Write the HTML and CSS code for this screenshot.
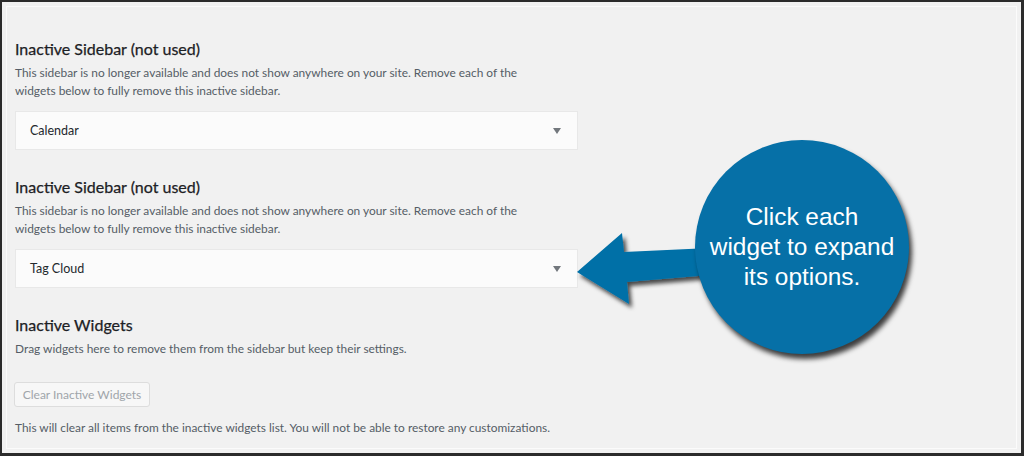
FILE: index.html
```html
<!DOCTYPE html>
<html lang="en">
<head>
  <meta charset="UTF-8" />
  <title>Widgets</title>
  <link rel="stylesheet" href="styles.css">
</head>
<body>

<div class="frame">
  <div class="content">

    <div class="sidebar">
      <h3>Inactive Sidebar (not used)</h3>
      <p class="desc">This sidebar is no longer available and does not show anywhere on your site. Remove each of the<br>widgets below to fully remove this inactive sidebar.</p>
      <div class="widget">
        <span>Calendar</span>
        <span class="caret"></span>
      </div>
    </div>

    <div class="sidebar">
      <h3>Inactive Sidebar (not used)</h3>
      <p class="desc">This sidebar is no longer available and does not show anywhere on your site. Remove each of the<br>widgets below to fully remove this inactive sidebar.</p>
      <div class="widget">
        <span>Tag Cloud</span>
        <span class="caret"></span>
      </div>
    </div>

    <div class="sidebar">
      <h3>Inactive Widgets</h3>
      <p class="desc">Drag widgets here to remove them from the sidebar but keep their settings.</p>
      <button class="clear-btn" disabled>Clear Inactive Widgets</button>
      <p class="desc note">This will clear all items from the inactive widgets list. You will not be able to restore any customizations.</p>
    </div>

  </div>

  <!-- callout overlay -->
  <div class="callout">
    <svg class="arrow" width="140" height="90" viewBox="0 0 140 90">
      <defs>
        <filter id="sh" x="-20%" y="-20%" width="150%" height="150%">
          <feDropShadow dx="3" dy="4" stdDeviation="2" flood-color="#000" flood-opacity="0.7"/>
        </filter>
      </defs>
      <polygon filter="url(#sh)" fill="#0670a7" points="2,45 47,6 49,25 135,21 135,48 52,55 54,77"/>
    </svg>
    <div class="bubble">Click each<br>widget to expand<br>its options.</div>
  </div>
</div>

</body>
</html>
```

FILE: styles.css
```css
html, body {
  margin: 0;
  padding: 0;
}
body {
  font-family: Lato, "Noto Sans", sans-serif;
  background: #f1f1f1;
  color: #23282d;
}
.frame {
  position: relative;
  box-sizing: border-box;
  width: 1024px;
  height: 456px;
  border: 3px solid #2b2b2b;
  border-top-width: 2px;
  border-left-width: 2px;
  box-shadow: inset 0 0 0 4px #f1f1f1, inset 0 0 0 5px #fbfbfb;
  background: #f1f1f1;
  overflow: hidden;
}
.content {
  width: 563px;
  padding: 36px 0 0 13px;
}
.sidebar h3 {
  margin: 0;
  font-size: 16px;
  font-weight: 400;
  color: #1d2125;
  line-height: 22px;
  -webkit-text-stroke: 0.25px #1d2125;
}
.desc {
  margin: 4px 0 0;
  font-size: 11.9px;
  line-height: 18px;
  color: #555d66;
}
.widget {
  display: flex;
  justify-content: space-between;
  align-items: center;
  box-sizing: border-box;
  height: 39px;
  margin: 11px 0 26px;
  padding: 0 16px 0 14px;
  background: #fbfbfb;
  border: 1px solid #e8e8e8;
  font-size: 12.5px;
  color: #23282d;
}
.caret {
  width: 0;
  height: 0;
  border-left: 4px solid transparent;
  border-right: 4px solid transparent;
  border-top: 6px solid #72777c;
}
.clear-btn {
  display: block;
  margin: 24px 0 0 -1px;
  height: 25px;
  width: 136px;
  padding: 0;
  font-family: inherit;
  font-size: 12px;
  color: #a0a5aa;
  background: #f7f7f7;
  border: 1px solid #ddd;
  border-radius: 3px;
}
.note {
  margin-top: 12px;
}
.callout {
  position: absolute;
  left: 573px;
  top: 136px;
  width: 340px;
  height: 230px;
}
.arrow {
  position: absolute;
  left: 0;
  top: 89px;
}
.bubble {
  position: absolute;
  left: 120px;
  top: 2px;
  width: 214px;
  height: 214px;
  border-radius: 50%;
  background: #0670a7;
  box-shadow: 3px 5px 5px rgba(0, 0, 0, 0.75);
  display: flex;
  align-items: center;
  justify-content: center;
  text-align: center;
  color: #fff;
  font-family: "Liberation Sans", Arial, sans-serif;
  font-size: 24.4px;
  line-height: 30px;
}
```
